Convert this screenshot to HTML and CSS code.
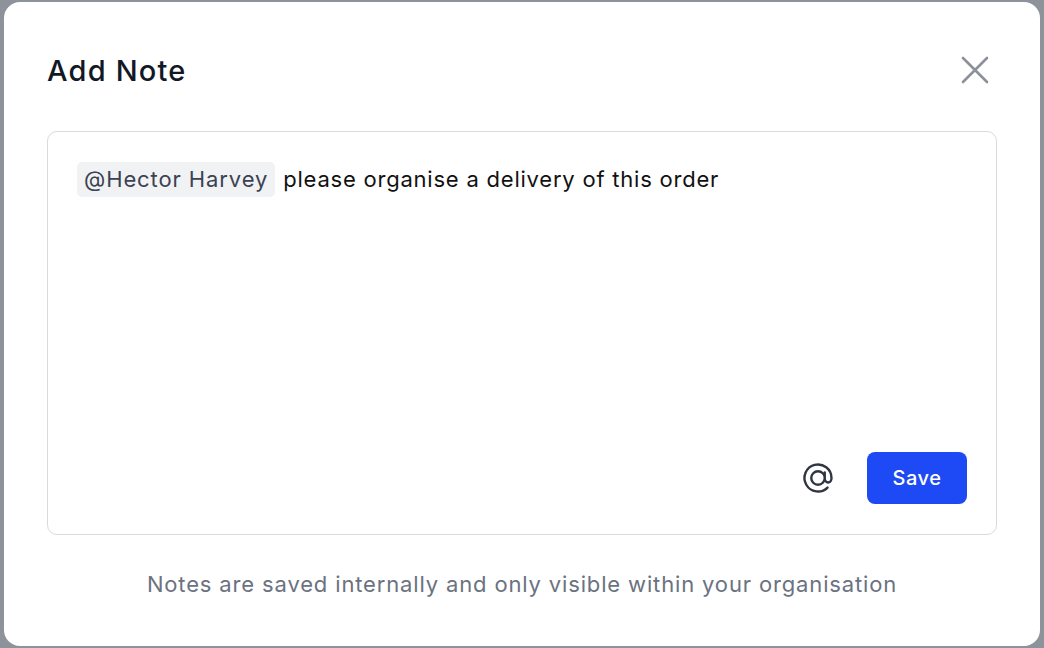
FILE: index.html
```html
<!DOCTYPE html>
<html lang="en">
<head>
<meta charset="utf-8">
<title>Add Note</title>
<link rel="stylesheet" href="styles.css">
</head>
<body>
<div class="backdrop">
  <div class="modal">
    <div class="modal-header">
      <h1 class="modal-title">Add Note</h1>
      <button class="close-btn" aria-label="Close">
        <svg width="28" height="28" viewBox="0 0 28 28" fill="none" stroke="currentColor" stroke-width="2.6" stroke-linecap="round">
          <path d="M2 2 L26 26 M26 2 L2 26"/>
        </svg>
      </button>
    </div>
    <div class="editor">
      <div class="editor-content">
        <span class="mention">@Hector Harvey</span> please organise a delivery of this order
      </div>
      <div class="editor-actions">
        <button class="at-btn" aria-label="Mention">
          <svg width="36" height="36" viewBox="0 0 24 24" fill="none" stroke="currentColor" stroke-width="1.6" stroke-linecap="round" stroke-linejoin="round">
            <path d="M16.5 12a4.5 4.5 0 11-9 0 4.5 4.5 0 019 0zm0 0c0 1.657 1.007 3 2.25 3S21 13.657 21 12a9 9 0 10-2.636 6.364M16.5 12V8.25"/>
          </svg>
        </button>
        <button class="save-btn">Save</button>
      </div>
    </div>
    <p class="footnote">Notes are saved internally and only visible within your organisation</p>
  </div>
</div>
</body>
</html>
```

FILE: styles.css
```css
* { box-sizing: border-box; }
html, body { margin: 0; padding: 0; }
body {
  background: #8e929b;
  font-family: Inter, "Noto Sans", sans-serif;
  width: 1044px;
  height: 648px;
  overflow: hidden;
}
.backdrop {
  padding: 2px 4px;
}
.modal {
  width: 1036px;
  height: 644px;
  background: #ffffff;
  border-radius: 16px;
  padding: 0 43px;
  display: flex;
  flex-direction: column;
}
.modal-header {
  display: flex;
  align-items: center;
  justify-content: space-between;
  height: 36px;
  margin-top: 50px;
  margin-bottom: 43px;
}
.modal-title {
  margin: 0;
  font-size: 29px;
  font-weight: 500;
  color: #121826;
  letter-spacing: 1.2px;
}
.close-btn {
  border: 0;
  background: none;
  padding: 0;
  margin-right: 8px;
  color: #8b909a;
  display: flex;
  cursor: pointer;
}
.editor {
  height: 404px;
  border: 1px solid #d8dade;
  border-radius: 10px;
  padding: 30px 29px 30px 29px;
  display: flex;
  flex-direction: column;
  justify-content: space-between;
}
.editor-content {
  font-size: 22px;
  letter-spacing: 0.78px;
  color: #111111;
  line-height: 35px;
}
.mention {
  display: inline-block;
  background: #f1f2f4;
  color: #3b4252;
  border-radius: 5px;
  padding: 0 7px;
  margin-right: 1px;
  letter-spacing: 0.9px;
}
.editor-actions {
  display: flex;
  align-items: center;
  justify-content: flex-end;
  gap: 31px;
}
.at-btn {
  border: 0;
  background: none;
  padding: 0;
  color: #2f3542;
  display: flex;
  margin-top: -1px;
}
.save-btn {
  width: 100px;
  height: 52px;
  border: 0;
  border-radius: 8px;
  background: #1d4af5;
  color: #ffffff;
  font-family: inherit;
  font-size: 20px;
  font-weight: 500;
  letter-spacing: 0.5px;
}
.footnote {
  margin: 36px 0 0;
  text-align: center;
  font-size: 22px;
  letter-spacing: 0.85px;
  color: #6b7280;
}
```
